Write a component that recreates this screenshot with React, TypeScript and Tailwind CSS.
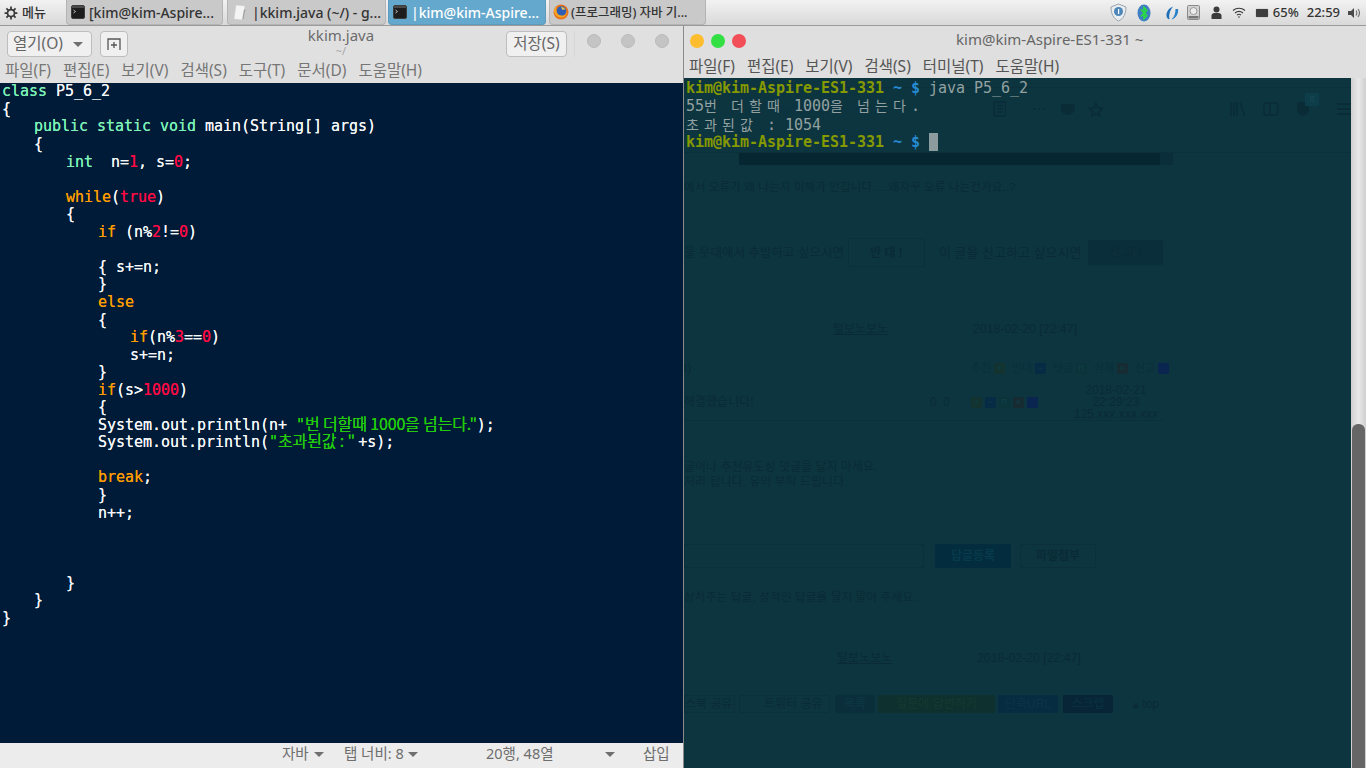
import React from "react";

const UI = "font-['Noto_Sans','Noto_Sans_CJK_KR',sans-serif]";
const MONO = "font-['DejaVu_Sans_Mono','Noto_Sans_CJK_KR',monospace]";
const GHOST = "font-['Liberation_Sans','Noto_Sans_CJK_KR',sans-serif] text-[12px] leading-[14px] text-[#0a2b36] whitespace-pre";

const Caret = ({ c = "border-t-[#6f6f6f]" }: { c?: string }) => (
  <span className={`inline-block w-0 h-0 border-x-[5px] border-x-transparent border-t-[5px] ${c}`} />
);

const TermIcon = () => (
  <svg width="14" height="14" viewBox="0 0 14 14" className="shrink-0">
    <rect x="0.5" y="0.5" width="13" height="13" rx="1.5" fill="#1d1d1d" stroke="#3d3d3d" />
    <rect x="1" y="1" width="12" height="2" fill="#4a4a4a" />
    <path d="M2.5 5l2 1.5-2 1.5" fill="none" stroke="#d0d0d0" strokeWidth="0.9" />
  </svg>
);

const Tab = ({ w, active, icon, children, ml }: { w: string; active?: boolean; icon: React.ReactNode; children: React.ReactNode; ml: string }) => (
  <div className={`${w} ${ml} h-[25px] shrink-0 rounded-b-[4px] border border-t-0 flex items-center gap-[4px] pl-[3px] overflow-hidden whitespace-nowrap text-[14px] font-medium ${active ? "bg-[#65a8cd] border-[#5c9bbd] text-white" : "bg-[#c9c9c9] border-[#b4b4b4] text-[#333333]"}`}>
    {icon}
    <span>{children}</span>
  </div>
);

const TopBar = () => (
  <div className={`${UI} h-[26px] shrink-0 flex items-start bg-gradient-to-b from-[#f2f2f2] to-[#d9d9d9] border-b border-[#9a9a9a]`}>
    <div className="w-[66px] shrink-0 h-[25px] flex items-center pl-[4px] gap-[4px] text-[13px] text-[#333333] font-medium">
      <svg width="14" height="14" viewBox="0 0 24 24" fill="none" stroke="#3a3a3a" strokeWidth="3">
        <circle cx="12" cy="12" r="6" />
        <path d="M12 1v5M12 18v5M1 12h5M18 12h5M4.2 4.2l3.6 3.6M16.2 16.2l3.6 3.6M4.2 19.8l3.6-3.6M16.2 7.8l3.6-3.6" />
      </svg>
      <span>메뉴</span>
    </div>
    <Tab ml="ml-0" w="w-[157px]" icon={<span className="ml-[1px]"><TermIcon /></span>}>[kim@kim-Aspire...</Tab>
    <Tab ml="ml-[4px]" w="w-[159px]" icon={
      <svg width="16" height="17" viewBox="0 0 16 17" className="ml-[1px] shrink-0">
        <path d="M4 1l9 1-3 14-8-1z" fill="#f4f4f4" stroke="#cfcfcf" strokeWidth="0.5" />
        <path d="M12 6l1.5-1-2 10-1 .5z" fill="#9f9f9f" />
      </svg>
    }>|kkim.java (~/) - g...</Tab>
    <Tab ml="ml-[2px]" w="w-[158px]" active icon={<span className="ml-[1px]"><TermIcon /></span>}>|kim@kim-Aspire...</Tab>
    <Tab ml="ml-[3px]" w="w-[157px]" icon={
      <svg width="16" height="16" viewBox="0 0 16 16" className="shrink-0">
        <circle cx="8" cy="8" r="7.5" fill="#e8731b" />
        <circle cx="8.5" cy="7" r="4.8" fill="#2f5fb5" />
        <path d="M1 7c1 5 5 7 8 6.5 3-.5 5-3 5-6-1 3-3 4.500-5 4.300C6 11.500 4 10 3.500 7.500 3 6 3 4 4.500 2.500 2 3.500 1 5 1 7z" fill="#f5a623" />
        <path d="M8 3c2 0 4 1 4.500 3-1-.7-2-.5-3 0-.5-1-1-2-1.500-3z" fill="#f7c948" />
      </svg>
    }><span className="text-[12.500px] -ml-[2px]">(프로그래밍) 자바 기...</span></Tab>
    <div className="flex-1" />
    <div className="h-[25px] flex items-center shrink-0 pr-[5px]">
      <svg width="17" height="19" viewBox="0 0 17 19" className="mr-[10px]">
        <path d="M8.500 1L16 4c0 7-2.500 11.500-7.500 14C3.500 15.500 1 11 1 4z" fill="#e9edf0" stroke="#9aa3ab" />
        <circle cx="8.500" cy="8.500" r="4.500" fill="#4d86b9" />
        <rect x="8" y="6" width="1.200" height="5" fill="#fff" />
      </svg>
      <svg width="14" height="18" viewBox="0 0 14 18" className="mr-[14px]">
        <ellipse cx="7" cy="9" rx="6.500" ry="8.500" fill="#3f7ec2" />
        <path d="M3.800 5.500l6 6-2.800 3V3.500l2.800 3-6 6" fill="none" stroke="#29e03a" strokeWidth="1.500" />
      </svg>
      <svg width="14" height="14" viewBox="0 0 14 14" className="mr-[8px]">
        <path d="M8 0.500C4 2 1 6 1.500 10c.3 2.500 2 3.500 3 3C3.500 9.500 5 4 8 .5z" fill="#1f6fb8" />
        <path d="M13 3C14 7 11 12.500 6.500 13.500 9.500 11 10.500 6.500 10.500 3z" fill="#2a80c8" />
      </svg>
      <svg width="13" height="15" viewBox="0 0 13 15" className="mr-[11px]">
        <rect x="0.500" y="0.500" width="12" height="14" rx="1" fill="#d2d2d2" stroke="#8a8a8a" />
        <circle cx="6.500" cy="6" r="3.500" fill="#ececec" stroke="#9a9a9a" />
        <rect x="1.500" y="11" width="10" height="2.500" fill="#777777" />
      </svg>
      <svg width="11" height="13" viewBox="0 0 11 13" className="mr-[10px]">
        <circle cx="5.500" cy="3.500" r="3" fill="#3b3b3b" />
        <path d="M0.500 13V9.500C0.500 8 2 7 3.500 7h4c1.500 0 3 1 3 2.500V13z" fill="#3b3b3b" />
      </svg>
      <svg width="14" height="11" viewBox="0 0 14 11" className="mr-[10px]" fill="none" stroke="#3b3b3b" strokeWidth="1.200">
        <path d="M1 3.500c3.500-3 8.500-3 12 0M3 6c2.500-2 5.500-2 8 0M5 8c1.200-.9 2.800-.9 4 0" />
        <circle cx="7" cy="10" r="0.800" fill="#3b3b3b" stroke="none" />
      </svg>
      <div className="w-[12px] h-[8px] rounded-[1px] bg-[#3e3e3e] mr-[5px] shadow-[0_0_1px_#555]" />
      <span className="text-[13px] font-medium text-[#333333] mr-[8px]">65%</span>
      <span className="text-[13px] font-medium text-[#333333] mr-[8px]">22:59</span>
      <svg width="13" height="12" viewBox="0 0 13 12" fill="none">
        <path d="M0 4h3l3-3v10L3 8H0z" fill="#4a4a4a" />
        <path d="M8 3.500c1 1.500 1 3.500 0 5M10 2c1.800 2.400 1.800 5.600 0 8" stroke="#6a6a6a" strokeWidth="1.100" />
      </svg>
    </div>
  </div>
);

type Tok = [string, string?];
const K = "text-[#7cf2b8]";
const O = "text-[#ff9c00]";
const R = "text-[#ff0a45]";
const S = "text-[#22cc0c]";
const SK = "text-[#22cc0c] font-['Noto_Sans_CJK_KR',sans-serif] text-[16px] leading-[1px] tracking-[-0.15px]";
const LEVEL = ["pl-0", "pl-[32px]", "pl-[64px]", "pl-[96px]", "pl-[128px]"];
const CODE: [number, Tok[]][] = [
  [0, [["class", K], [" P5_6_2"]]],
  [0, [["{"]]],
  [1, [["public static void", K], [" main(String[] args)"]]],
  [1, [["{"]]],
  [2, [["int", K], ["  n="], ["1", R], [", s="], ["0", R], [";"]]],
  [0, []],
  [2, [["while", O], ["("], ["true", R], [")"]]],
  [2, [["{"]]],
  [3, [["if", O], [" (n%"], ["2", R], ["!="], ["0", R], [")"]]],
  [0, []],
  [3, [["{ s+=n;"]]],
  [3, [["}"]]],
  [3, [["else", O]]],
  [3, [["{"]]],
  [4, [["if", O], ["(n%"], ["3", R], ["=="], ["0", R], [")"]]],
  [4, [["s+=n;"]]],
  [3, [["}"]]],
  [3, [["if", O], ["(s>"], ["1000", R], [")"]]],
  [3, [["{"]]],
  [3, [["System.out.println(n+ "], ["\"", S], ["번 더할때 1000을 넘는다.\"", SK], [");"]]],
  [3, [["System.out.println("], ["\"", S], ["초과된값 : \" ", SK], ["+s);"]]],
  [0, []],
  [3, [["break", O], [";"]]],
  [3, [["}"]]],
  [3, [["n++;"]]],
  [0, []],
  [0, []],
  [0, []],
  [2, [["}"]]],
  [1, [["}"]]],
  [0, [["}"]]],
];

const Editor = () => (
  <div className={`${UI} w-[684px] shrink-0 flex flex-col border-r border-[#8a8a8a]`}>
    <div className="h-[57px] shrink-0 bg-[#e0e0e0] flex flex-col">
      <div className="h-[32px] shrink-0 flex items-start pt-[5px] pl-[7px]">
        <div className="w-[85px] h-[26px] rounded-[4px] border border-[#bdbdbd] bg-[#f0f0f0] flex items-center pl-[5px] text-[15.500px] text-[#666666]">
          <span className="w-[60px]">열기(O)</span>
          <Caret />
        </div>
        <div className="ml-[8px] w-[28px] h-[26px] rounded-[4px] border border-[#bdbdbd] bg-[#f0f0f0] flex items-center justify-center">
          <svg width="14" height="12" viewBox="0 0 14 12" fill="none" stroke="#555555" strokeWidth="1.300">
            <path d="M1 12V1h12v11M7 4v6M4 7h6" />
          </svg>
        </div>
        <div className="ml-[127px] w-[172px] -mt-[5px] text-center flex flex-col items-center">
          <span className="text-[15px] leading-[19px] text-[#6c6c6c]">kkim.java</span>
          <span className="text-[11px] leading-[11px] text-[#a8a8a8]">~/</span>
        </div>
        <div className="ml-[79px] w-[61px] h-[26px] rounded-[4px] border border-[#bdbdbd] bg-[#f0f0f0] flex items-center justify-center text-[15.500px] text-[#666666]">저장(S)</div>
        <div className="ml-[7px] w-px h-[26px] bg-[#d6d6d6]" />
        <div className="ml-[12px] mt-[3px] flex gap-[20px]">
          <span className="w-[14px] h-[14px] rounded-full bg-[#c4c4c4] border border-[#bababa]" />
          <span className="w-[14px] h-[14px] rounded-full bg-[#c4c4c4] border border-[#bababa]" />
          <span className="w-[14px] h-[14px] rounded-full bg-[#c4c4c4] border border-[#bababa]" />
        </div>
      </div>
      <div className="flex-1 flex items-center pl-[5px] gap-[12px] text-[15.500px] text-[#767676] whitespace-nowrap">
        <span>파일(F)</span><span>편집(E)</span><span>보기(V)</span><span>검색(S)</span><span>도구(T)</span><span>문서(D)</span><span>도움말(H)</span>
      </div>
    </div>
    <div className={`${MONO} flex-1 bg-[#001b37] text-[#f4f6f8] text-[15px] tracking-[-0.03px] leading-[17.55px] pl-[2px] pt-[0.4px] whitespace-pre overflow-hidden [text-shadow:0_0_0.4px_currentColor]`}>
      {CODE.map(([lvl, line], i) => (
        <div key={i} className={`h-[17.55px] ${LEVEL[lvl]}`}>
          {line.map(([t, c], j) => <span key={j} className={c}>{t}</span>)}
        </div>
      ))}
    </div>
    <div className="h-[25px] shrink-0 bg-[#ececec] flex items-center text-[14.500px] text-[#6e6e6e] whitespace-nowrap pb-[3px]">
      <span className="ml-[282px] w-[32px]">자바</span>
      <Caret />
      <span className="ml-[20px] w-[64px]">탭 너비: 8</span>
      <Caret />
      <span className="ml-[68px] w-[119px]">20행, 48열</span>
      <Caret />
      <span className="ml-[28px]">삽입</span>
    </div>
  </div>
);

const Prompt = () => (
  <>
    <span className="font-bold text-[#859900]">kim@kim-Aspire-ES1-331</span>
    <span className="font-bold text-[#268bd2]"> ~ $ </span>
  </>
);

const Wide = ({ s }: { s: string }) => (
  <span className="inline-block w-[18px] text-[14px]">{s}</span>
);

const Sq = ({ c, t }: { c: string; t: string }) => (
  <span className={`inline-flex w-[11px] h-[11px] items-center justify-center text-[9px] leading-none text-[#0f3f4a] ${c}`}>{t}</span>
);

const Label = ({ t }: { t: string }) => <span className="w-[21px] text-[11px] overflow-visible">{t}</span>;

const Ghost = () => (
  <div className={`${GHOST} col-start-1 row-start-1 flex flex-col overflow-hidden`}>
    <div className="h-[10px] shrink-0 border-b border-[#0b303b]" />
    <div className="h-[42px] shrink-0 flex items-center">
      <span className="ml-[90px] w-[222px] text-[#0b3440]">ogi/humor/80...m_cu</span>
      <svg width="14" height="16" viewBox="0 0 14 16" fill="none" stroke="#0a2c37" strokeWidth="1.500"><rect x="1" y="1" width="12" height="14" rx="1" /><path d="M4 5h6M4 8h6M4 11h6" /></svg>
      <span className="ml-[26px] w-[28px] text-[#0a2c37] font-bold tracking-[1px]">···</span>
      <svg width="16" height="14" viewBox="0 0 16 14" fill="#0a2c37"><path d="M1 2h14v5c0 3-4 6-7 6S1 10 1 7z" /></svg>
      <svg width="16" height="15" viewBox="0 0 16 15" fill="none" stroke="#0a2c37" strokeWidth="1.500" className="ml-[12px]"><path d="M8 1l2 5 5 .3-4 3.300 1.400 5L8 11.800 3.600 14.600 5 9.600 1 6.300 6 6z" /></svg>
      <svg width="16" height="14" viewBox="0 0 16 14" fill="none" stroke="#0a2c37" strokeWidth="1.500" className="ml-[127px]"><path d="M1 0v14M4 0v14M7 0v14M10 0l5 14" /></svg>
      <svg width="16" height="14" viewBox="0 0 16 14" fill="none" stroke="#0a2c37" strokeWidth="1.500" className="ml-[17px]"><rect x="1" y="1" width="14" height="12" rx="2" /><path d="M7 1v12" /></svg>
      <span className="ml-[17px] relative w-[14px] h-[16px]">
        <svg width="14" height="16" viewBox="0 0 14 16" fill="#0a2c37"><path d="M1 1h12v8c0 3-3 5-6 6-3-1-6-3-6-6z" /></svg>
        <span className="absolute left-[9px] -top-[8px] w-[14px] h-[13px] bg-[#0c3d48] text-[9px] leading-[13px] text-center text-[#1a4a55]">8</span>
      </span>
      <span className="ml-[27px] flex flex-col gap-[3px] w-[14px] shrink-0"><i className="h-[2px] bg-[#0a2c37]" /><i className="h-[2px] bg-[#0a2c37]" /><i className="h-[2px] bg-[#0a2c37]" /></span>
    </div>
    <div className="h-[23px] shrink-0 border-b border-[#0b303b]" />
    <div className="ml-[55px] w-[434px] h-[12px] flex shrink-0">
      <span className="flex-1 bg-[#062631]" />
      <span className="w-[13px] bg-[#0a2f3a]" />
    </div>
    <div className="mt-[15px] text-[11.700px]">에서 오류가 왜 나는지 이해가 안갑니다.....왜자꾸 오류 나는건가요..?</div>
    <div className="mt-[44px] h-[29px] flex items-center">
      <span className="w-[159px] text-right text-[12.500px]">을 웃대에서 추방하고 싶으시면</span>
      <span className="ml-[5px] w-[77px] h-[29px] border border-[#0b303b] rounded-[2px] flex items-center justify-center font-bold">반 대 !</span>
      <span className="ml-[14px] w-[149px] text-[13px]">이 글을 신고하고 싶으시면</span>
      <span className="w-[75px] h-[25px] bg-[#0a2f3b] rounded-[2px] flex items-center justify-center font-bold">신 고 !</span>
    </div>
    <div className="mt-[55px] flex">
      <span className="ml-[149px] w-[140px] underline">털보노보노</span>
      <span className="text-[12.300px]">2018-02-20 [22:47]</span>
    </div>
    <div className="mt-[25px] flex items-center">
      <span className="w-[287px]">t)</span>
      <span className="flex items-center gap-[7px] text-[#0a2f3a]">
        <span className="flex items-center gap-[2px]"><Label t="추천" /><Sq c="bg-[#12332f]" t="+" /></span>
        <span className="flex items-center gap-[2px]"><Label t="반대" /><Sq c="bg-[#052c44]" t="−" /></span>
        <span className="flex items-center gap-[2px]"><Label t="덧글" /><Sq c="bg-[#0a343a]" t="R" /></span>
        <span className="flex items-center gap-[2px]"><Label t="삭제" /><Sq c="bg-[#172c32]" t="×" /></span>
        <span className="flex items-center gap-[2px]"><Label t="신고" /><Sq c="bg-[#0a2550]" t="" /></span>
      </span>
    </div>
    <div className="mt-[9px] h-[37px] flex items-center border-b border-[#0b303b] w-[480px]">
      <span className="w-[246px]">해결했습니다!</span>
      <span className="w-[41px]">0  0</span>
      <span className="flex gap-[3px] w-[103px]">
        <Sq c="bg-[#12332f]" t="+" /><Sq c="bg-[#052c44]" t="−" /><Sq c="bg-[#0a343a]" t="R" /><Sq c="bg-[#172c32]" t="×" /><Sq c="bg-[#0a2550]" t="" />
      </span>
      <span className="text-center leading-[12px]">2018-02-21<br />22:29:23<br />125.xxx.xxx.xxx</span>
    </div>
    <div className="mt-[39px] leading-[15px]">글이나 추천유도성 덧글을 달지 마세요.<br />처리 됩니다. 유의 부탁 드립니다.</div>
    <div className="mt-[54px] h-[24px] flex items-center">
      <span className="w-[240px] h-[24px] border border-[#0b303b]" />
      <span className="ml-[11px] w-[76px] h-[24px] bg-[#032c3e] rounded-[2px] flex items-center justify-center font-bold text-[#073a4c]">답글등록</span>
      <span className="ml-[9px] w-[76px] h-[24px] border border-[#0b303b] rounded-[2px] flex items-center justify-center font-bold">파일첨부</span>
    </div>
    <div className="mt-[22px] text-[11.800px]">상처주는 답글, 성적인 답글을 달지 말아 주세요.</div>
    <div className="mt-[47px] flex">
      <span className="ml-[153px] w-[140px] underline">털보노보노</span>
      <span className="text-[12.300px]">2018-02-20 [22:47]</span>
    </div>
    <div className="mt-[30px] h-[18px] flex items-center">
      <span className="w-[51px] h-[18px] border border-[#0b303b] rounded-[2px] flex items-center">스북 공유</span>
      <span className="ml-[4px] w-[91px] h-[18px] border border-[#0b303b] rounded-[2px] flex items-center pl-[24px]">트위터 공유</span>
      <span className="ml-[5px] w-[40px] h-[18px] bg-[#0a2f3b] text-[#0c3844] rounded-[2px] flex items-center justify-center">목록</span>
      <span className="ml-[3px] w-[117px] h-[18px] bg-[#0e302e] text-[#153a30] rounded-[2px] flex items-center justify-center">질문에 답변하기</span>
      <span className="ml-[3px] w-[60px] h-[18px] bg-[#062c42] text-[#0a3448] rounded-[2px] flex items-center justify-center">단축URL</span>
      <span className="ml-[5px] w-[50px] h-[18px] bg-[#072536] text-[#0a3344] rounded-[2px] flex items-center justify-center">스크랩</span>
      <span className="ml-[20px]">▴ top</span>
    </div>
  </div>
);

const Terminal = () => (
  <div className={`${UI} flex-1 flex flex-col min-w-0`}>
    <div className="h-[52px] shrink-0 bg-[#dfdfdf] flex flex-col">
      <div className="h-[29px] shrink-0 flex items-center">
        <div className="pl-[6px] w-[272px] flex gap-[7px] shrink-0">
          <span className="w-[14px] h-[14px] rounded-full bg-[#fdbd2e]" />
          <span className="w-[14px] h-[14px] rounded-full bg-[#32e044]" />
          <span className="w-[14px] h-[14px] rounded-full bg-[#f24e58]" />
        </div>
        <span className="text-[15px] text-[#666666] whitespace-nowrap pb-[3px]">kim@kim-Aspire-ES1-331 ~</span>
      </div>
      <div className="flex-1 flex items-center pl-[5px] gap-[12px] text-[15.500px] text-[#555555] whitespace-nowrap pb-[4px]">
        <span>파일(F)</span><span>편집(E)</span><span>보기(V)</span><span>검색(S)</span><span>터미널(T)</span><span>도움말(H)</span>
      </div>
    </div>
    <div className="flex-1 flex min-h-0">
      <div className="flex-1 bg-[#0d3540] grid min-w-0 overflow-hidden">
        <Ghost />
        <div className={`${MONO} col-start-1 row-start-1 z-10 pl-[2px] text-[15px] tracking-[-0.03px] leading-[18px] text-[#93a1a1] whitespace-pre`}>
          <div className="h-[18px] mt-[1px]"><Prompt />java P5_6_2</div>
          <div className="h-[18px]">55<Wide s="번" /> <Wide s="더" /><Wide s="할" /><Wide s="때" /> 1000<Wide s="을" /> <Wide s="넘" /><Wide s="는" /><Wide s="다" />.</div>
          <div className="h-[18px] pt-[1px]"><Wide s="초" /><Wide s="과" /><Wide s="된" /><Wide s="값" /> : 1054</div>
          <div className="h-[18px] flex"><span><Prompt /></span><span className="w-[9px] h-[18px] bg-[#8c9b9d]" /></div>
        </div>
      </div>
      <div className="w-[15px] shrink-0 bg-gradient-to-r from-[#cfcfcf] via-[#e8e8e8] to-[#cfcfcf] flex flex-col pt-[346px] px-[1px]">
        <div className="flex-1 rounded-t-[6px] bg-[#666666]" />
      </div>
    </div>
  </div>
);

export default function App() {
  return (
    <div className="w-[1366px] h-[768px] overflow-hidden flex flex-col bg-[#dfdfdf]">
      <TopBar />
      <div className="flex-1 flex min-h-0">
        <Editor />
        <Terminal />
      </div>
    </div>
  );
}
